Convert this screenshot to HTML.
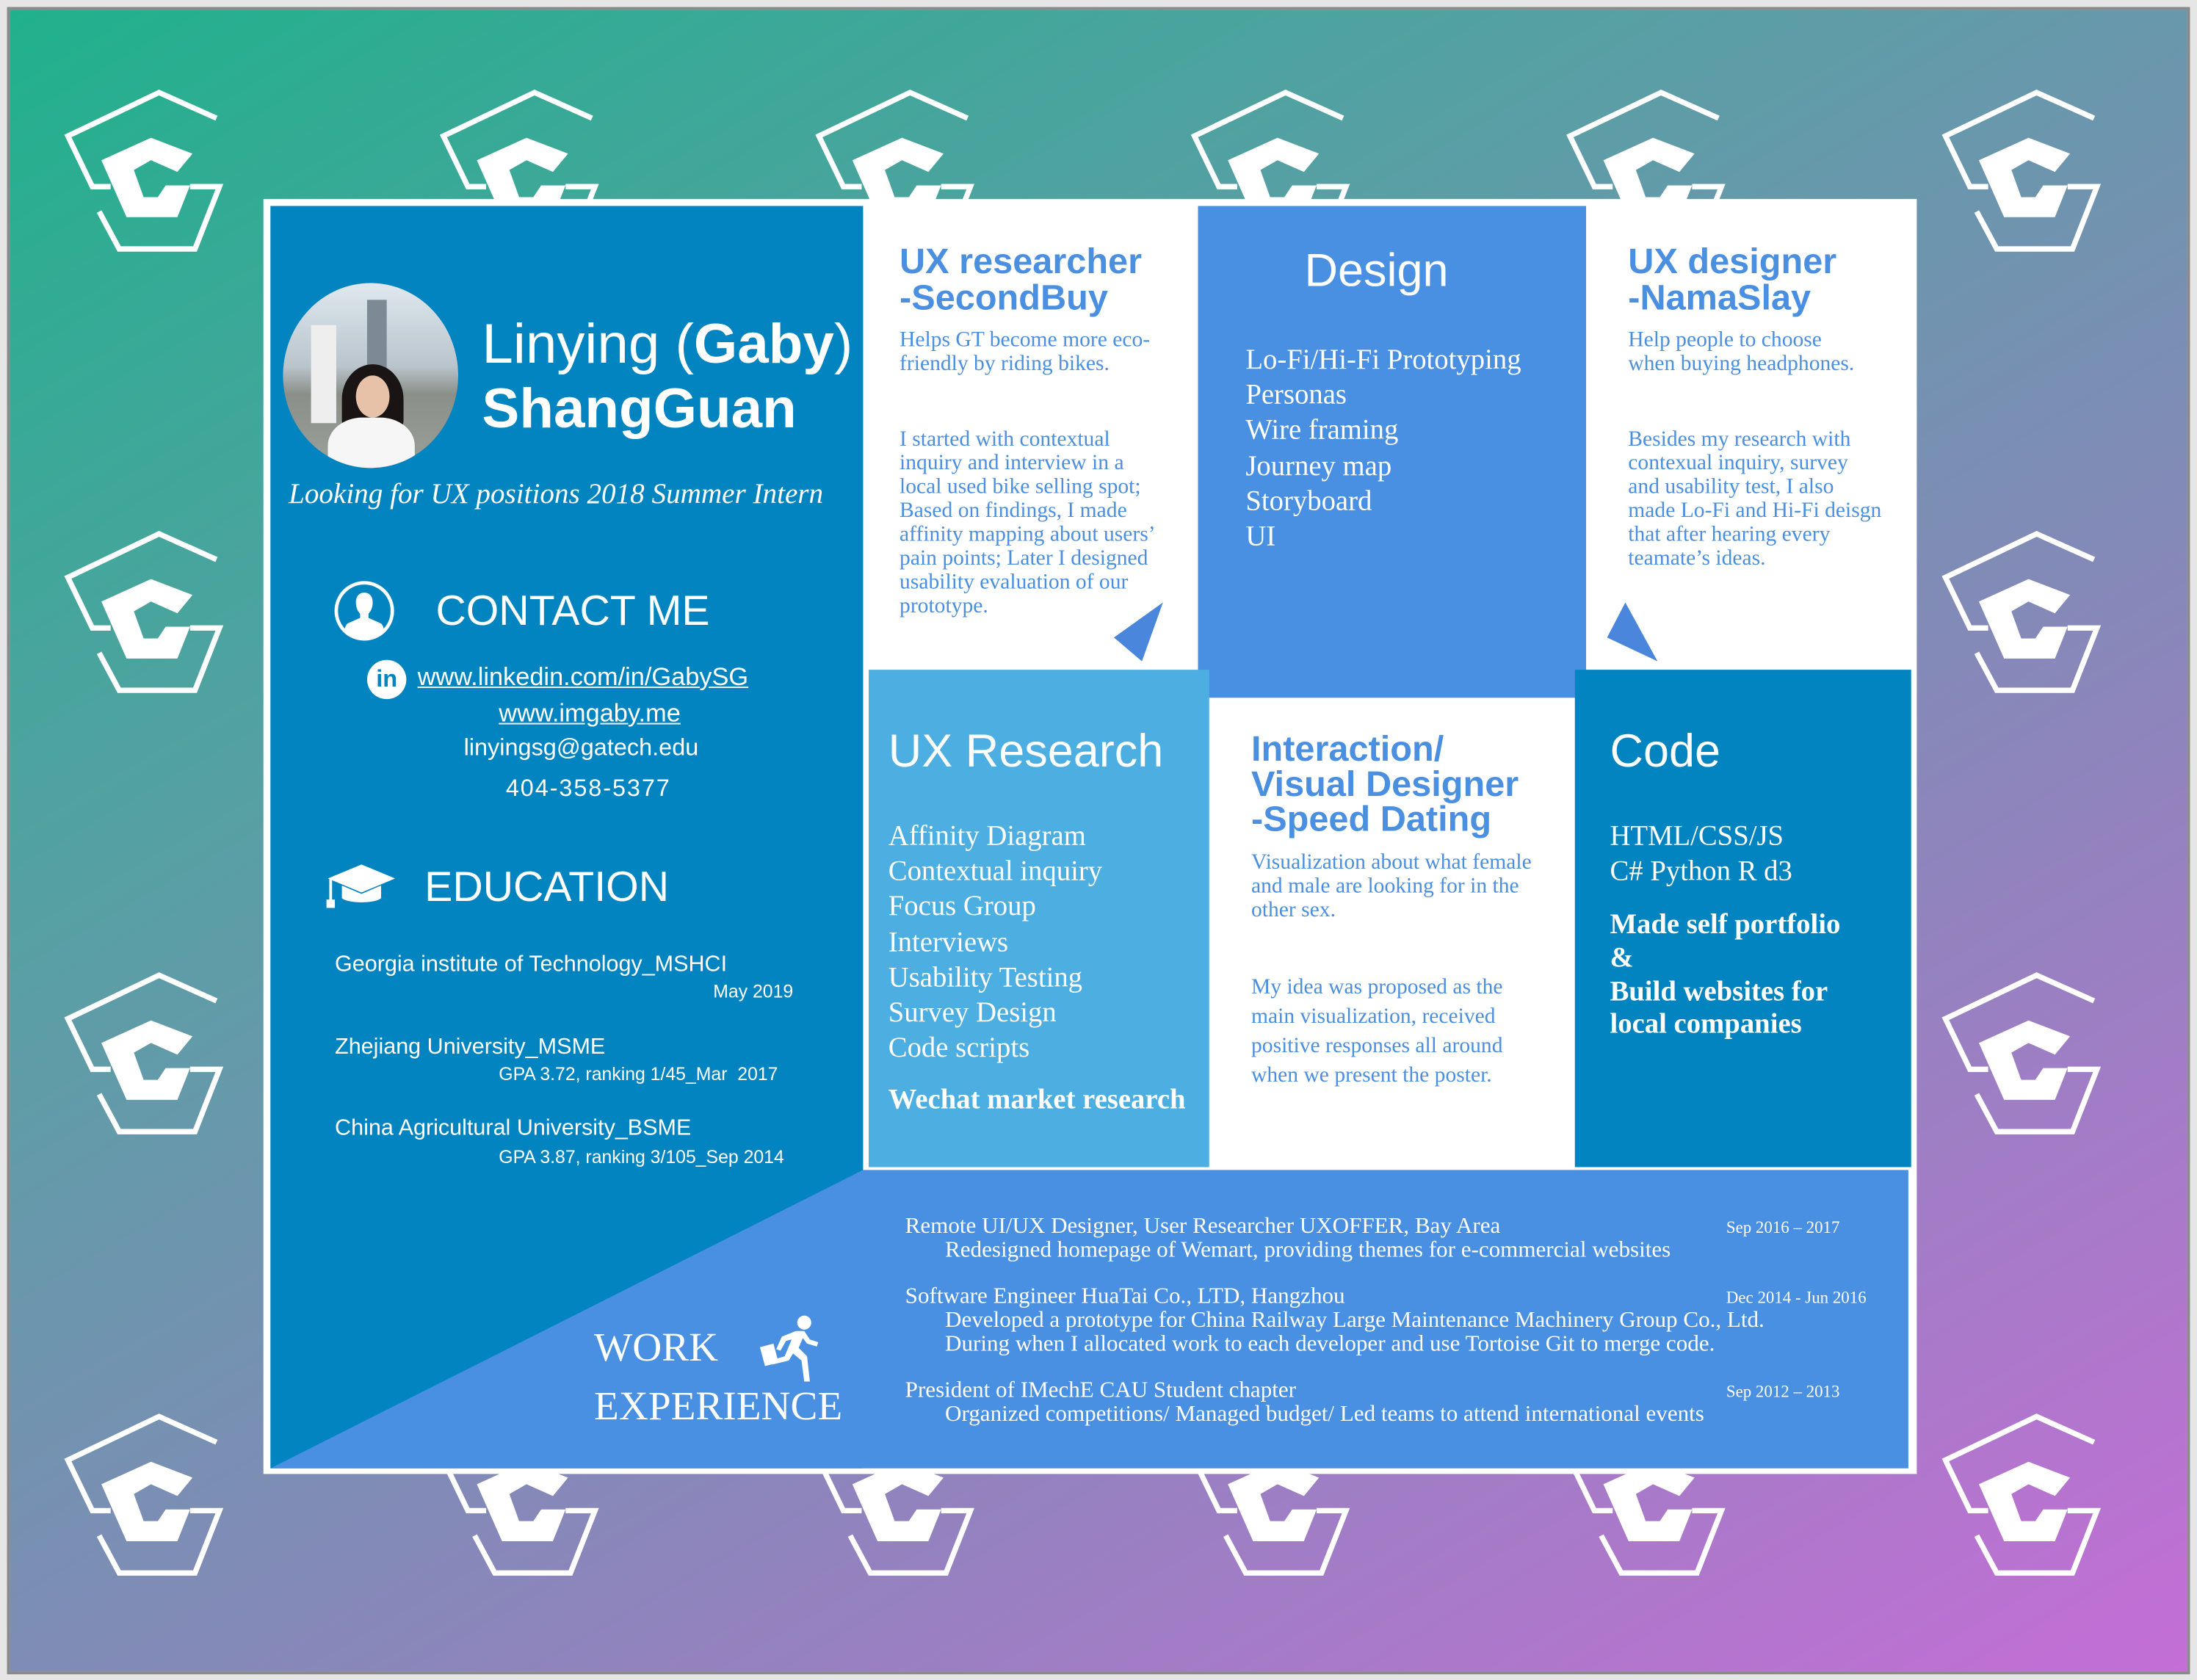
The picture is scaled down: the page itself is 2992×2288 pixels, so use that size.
<!DOCTYPE html>
<html><head><meta charset="utf-8">
<style>
html,body{margin:0;padding:0;}
body{width:2992px;height:2288px;overflow:hidden;background:#e6e6e6;}
#s{position:absolute;left:0;top:0;width:1568px;height:1199px;transform:scale(1.90816);transform-origin:0 0;font-family:"Liberation Sans",sans-serif;}
#bg{position:absolute;left:5px;top:5px;width:1554px;height:1186px;border:2px solid #8a8a8a;background:linear-gradient(150deg,#20b18c 0%,#5c9ea6 35%,#8b86bb 65%,#c46ed6 100%);overflow:hidden;}
.logo{position:absolute;width:157px;height:146.7px;}
.a{position:absolute;white-space:nowrap;}
.ser{font-family:"Liberation Serif",serif;}
.w{color:#fff;}
.b{color:#4a8fe0;}
</style></head><body><div id="s">
<div id="bg"></div>
<svg width="0" height="0" style="position:absolute"><defs><g id="lg"><polyline points="708,185 473,80 100,258 200,465 275,465" fill="none" stroke="#fff" stroke-width="22"/><polyline points="228,567 310,720 620,720 720,465 600,465" fill="none" stroke="#fff" stroke-width="22"/><polygon points="237,357 440,265 610,330 548,405 440,357 370,397 410,508 468,508 500,460 600,460 548,590 340,590" fill="#fff"/></g></defs></svg>
<div id="logos"></div>
<script>
var h='';for(var r=0;r<4;r++)for(var c=0;c<6;c++){h+='<svg class="logo" viewBox="0 0 900 840" style="left:'+(31.4+c*268)+'px;top:'+(52.4+r*315)+'px"><use href="#lg"/></svg>';}
document.getElementById('logos').innerHTML=h;
</script>
<div style="position:absolute;left:188px;top:142px;width:1180px;height:910px;background:#fff;"></div>
<div style="position:absolute;left:193px;top:147px;width:423px;height:901px;background:#0284c1;"></div>
<div style="position:absolute;left:855px;top:147px;width:277px;height:351px;background:#4a90e2;"></div>
<div style="position:absolute;left:620px;top:478px;width:243px;height:355px;background:#4daee2;"></div>
<div style="position:absolute;left:1124px;top:478px;width:240px;height:355px;background:#0284c1;"></div>
<svg style="position:absolute;left:0;top:0" width="1568" height="1199"><polygon points="616,835 1362,835 1362,1048 193,1048" fill="#4a90e2"/>
<polygon points="830,430 795,455 815,472" fill="#4a86dc"/><polygon points="1147,455 1160,430 1183,472" fill="#4a86dc"/></svg>

<div style="position:absolute;left:202px;top:202px;width:125px;height:132px;border-radius:50%;overflow:hidden;background:linear-gradient(#dfe8ef 0%,#b9c4cc 45%,#8a8f88 60%,#9aa09a 100%);">
<div style="position:absolute;left:20px;top:30px;width:18px;height:70px;background:#eee;"></div>
<div style="position:absolute;left:60px;top:12px;width:14px;height:50px;background:#7d8a96;"></div>
<div style="position:absolute;left:42px;top:58px;width:44px;height:50px;border-radius:50% 50% 20% 20%;background:#1b1414;"></div>
<div style="position:absolute;left:52px;top:66px;width:24px;height:30px;border-radius:50%;background:#e8c2a8;"></div>
<div style="position:absolute;left:32px;top:96px;width:62px;height:50px;border-radius:40% 40% 0 0;background:#f6f6f6;"></div>
</div>
<div class="a w" style="left:344px;top:222px;font-size:40px;line-height:48px;">Linying (<b>Gaby</b>)</div>
<div class="a w" style="left:344px;top:268px;font-size:40px;line-height:48px;font-weight:bold;">ShangGuan</div>
<div class="a w ser" style="left:206px;top:342px;font-size:20.5px;font-style:italic;">Looking for UX positions 2018 Summer Intern</div>

<svg style="position:absolute;left:238px;top:414px" width="44" height="44" viewBox="0 0 44 44"><circle cx="22" cy="22" r="20" fill="none" stroke="#fff" stroke-width="2.5"/><path d="M22 9c-4 0-6 3-6 7 0 3 1 6 3 8v3l-9 4c-1 1-2 3-2 5a19 19 0 0 0 28 0c0-2-1-4-2-5l-9-4v-3c2-2 3-5 3-8 0-4-2-7-6-7z" fill="#fff"/></svg>
<div class="a w" style="left:311px;top:420px;font-size:30px;">CONTACT ME</div>

<div style="position:absolute;left:262px;top:471px;width:28px;height:28px;border-radius:50%;background:#fff;color:#0284c1;font-weight:bold;font-size:17px;text-align:center;line-height:28px;">in</div>
<div class="a w" style="left:298px;top:473px;font-size:18px;text-decoration:underline;">www.linkedin.com/in/GabySG</div>
<div class="a w" style="left:356px;top:499px;font-size:18px;text-decoration:underline;">www.imgaby.me</div>
<div class="a w" style="left:331px;top:524px;font-size:17px;">linyingsg@gatech.edu</div>
<div class="a w" style="left:361px;top:553px;font-size:17px;letter-spacing:1px;">404-358-5377</div>

<svg style="position:absolute;left:232px;top:615px" width="52" height="36" viewBox="0 0 52 36"><polygon points="26,2 50,12 26,22 2,12" fill="#fff"/><path d="M12 17v9c4 4 24 4 28 0v-9l-14 6z" fill="#fff"/><rect x="3" y="12" width="2" height="16" fill="#fff"/><rect x="1" y="27" width="6" height="6" fill="#fff"/></svg>
<div class="a w" style="left:303px;top:617px;font-size:30px;">EDUCATION</div>

<div class="a w" style="left:239px;top:680px;font-size:16px;">Georgia institute of Technology_MSHCI</div>
<div class="a w" style="left:509px;top:700px;font-size:13px;">May 2019</div>
<div class="a w" style="left:239px;top:739px;font-size:16px;">Zhejiang University_MSME</div>
<div class="a w" style="left:356px;top:759px;font-size:13px;">GPA 3.72, ranking 1/45_Mar &nbsp;2017</div>
<div class="a w" style="left:239px;top:797px;font-size:16px;">China Agricultural University_BSME</div>
<div class="a w" style="left:356px;top:818px;font-size:13px;">GPA 3.87, ranking 3/105_Sep 2014</div>

<div class="a b" style="left:642px;top:174px;font-size:25.5px;font-weight:bold;line-height:26px;">UX researcher<br>-SecondBuy</div>
<div class="a b ser" style="left:642px;top:234px;font-size:15.5px;line-height:17px;">Helps GT become more eco-<br>friendly by riding bikes.</div>
<div class="a b ser" style="left:642px;top:305px;font-size:15.5px;line-height:17px;">I started with contextual<br>inquiry and interview in a<br>local used bike selling spot;<br>Based on findings, I made<br>affinity mapping about users’<br>pain points; Later I designed<br>usability evaluation of our<br>prototype.</div>

<div class="a w" style="left:931px;top:174px;font-size:33px;">Design</div>
<div class="a w ser" style="left:889px;top:245px;font-size:20.3px;line-height:25.2px;">Lo-Fi/Hi-Fi Prototyping<br>Personas<br>Wire framing<br>Journey map<br>Storyboard<br>UI</div>

<div class="a b" style="left:1162px;top:174px;font-size:25.5px;font-weight:bold;line-height:26px;">UX designer<br>-NamaSlay</div>
<div class="a b ser" style="left:1162px;top:234px;font-size:15.5px;line-height:17px;">Help people to choose<br>when buying headphones.</div>
<div class="a b ser" style="left:1162px;top:305px;font-size:15.5px;line-height:17px;">Besides my research with<br>contexual inquiry, survey<br>and usability test, I also<br>made Lo-Fi and Hi-Fi deisgn<br>that after hearing every<br>teamate’s ideas.</div>

<div class="a w" style="left:634px;top:517px;font-size:33px;">UX Research</div>
<div class="a w ser" style="left:634px;top:585px;font-size:20.3px;line-height:25.2px;">Affinity Diagram<br>Contextual inquiry<br>Focus Group<br>Interviews<br>Usability Testing<br>Survey Design<br>Code scripts</div>
<div class="a w ser" style="left:634px;top:774px;font-size:20.3px;font-weight:bold;">Wechat market research</div>

<div class="a b" style="left:893px;top:523px;font-size:25.5px;font-weight:bold;line-height:25px;">Interaction/<br>Visual Designer<br>-Speed Dating</div>
<div class="a b ser" style="left:893px;top:607px;font-size:15.5px;line-height:17px;">Visualization about what female<br>and male are looking for in the<br>other sex.</div>
<div class="a b ser" style="left:893px;top:694px;font-size:15.5px;line-height:21px;">My idea was proposed as the<br>main visualization, received<br>positive responses all around<br>when we present the poster.</div>

<div class="a w" style="left:1149px;top:517px;font-size:33px;">Code</div>
<div class="a w ser" style="left:1149px;top:585px;font-size:20.3px;line-height:25.2px;">HTML/CSS/JS<br>C# Python R d3</div>
<div class="a w ser" style="left:1149px;top:648px;font-size:20.3px;font-weight:bold;line-height:24px;">Made self portfolio<br>&amp;<br>Build websites for</div>
<div class="a w ser" style="left:1149px;top:720px;font-size:20.3px;font-weight:bold;">local companies</div>

<div class="a w ser" style="left:646px;top:866px;font-size:16.3px;line-height:17px;">Remote UI/UX Designer, User Researcher UXOFFER, Bay Area<br>&nbsp;&nbsp;&nbsp;&nbsp;&nbsp;&nbsp;&nbsp;Redesigned homepage of Wemart, providing themes for e-commercial websites</div>
<div class="a w ser" style="left:646px;top:916px;font-size:16.3px;line-height:17px;">Software Engineer HuaTai Co., LTD, Hangzhou<br>&nbsp;&nbsp;&nbsp;&nbsp;&nbsp;&nbsp;&nbsp;Developed a prototype for China Railway Large Maintenance Machinery Group Co., Ltd.<br>&nbsp;&nbsp;&nbsp;&nbsp;&nbsp;&nbsp;&nbsp;During when I allocated work to each developer and use Tortoise Git to merge code.</div>
<div class="a w ser" style="left:646px;top:983px;font-size:16.3px;line-height:17px;">President of IMechE CAU Student chapter<br>&nbsp;&nbsp;&nbsp;&nbsp;&nbsp;&nbsp;&nbsp;Organized competitions/ Managed budget/ Led teams to attend international events</div>
<div class="a w ser" style="left:1232px;top:869px;font-size:12px;">Sep 2016 – 2017</div>
<div class="a w ser" style="left:1232px;top:919px;font-size:12px;">Dec 2014 - Jun 2016</div>
<div class="a w ser" style="left:1232px;top:986px;font-size:12px;">Sep 2012 – 2013</div>
<div class="a w ser" style="left:424px;top:946px;font-size:29px;">WORK</div>
<div class="a w ser" style="left:424px;top:988px;font-size:29px;">EXPERIENCE</div>
<svg style="position:absolute;left:540px;top:938px" width="50" height="50" viewBox="0 0 50 50"><circle cx="34" cy="6" r="5" fill="#fff"/><path d="M28 12l-10 4-4 9 3 1 4-7 4-1-5 12-10 3 1 3 12-3 3-5 6 5 2 15h4l-2-18-6-6 3-7 3 4 7 2 1-3-6-2-4-6z" fill="#fff"/><rect x="4" y="22" width="10" height="14" fill="#fff" transform="rotate(-15 9 29)"/></svg>
</div></body></html>
